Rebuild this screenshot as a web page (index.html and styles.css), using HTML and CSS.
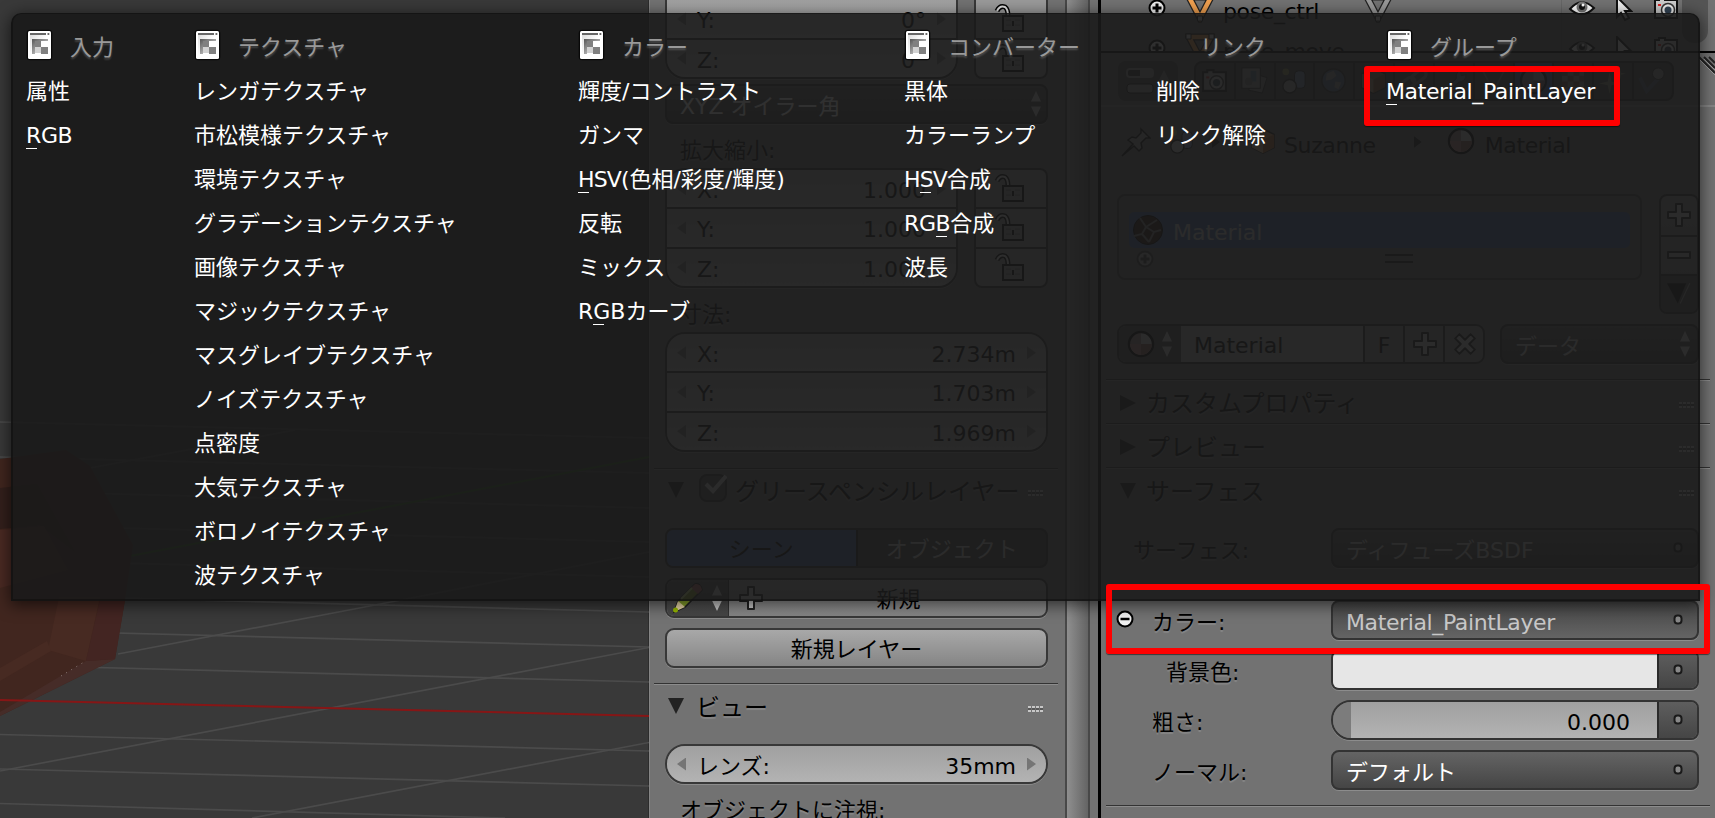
FILE: index.html
```
<!DOCTYPE html>
<html lang="ja">
<head>
    <meta charset="UTF-8">
    <meta name="viewport" content="width=device-width, initial-scale=1.0">
    <title>Blender</title>
    <link rel="stylesheet" href="styles.css">
</head>
<body>
    <!-- shared icons -->
    <svg class="defs" width="0" height="0">
        <defs>
            <linearGradient id="paper" x1="0" y1="0" x2="1" y2="1"><stop offset="0" stop-color="#ddd"/><stop offset=".5" stop-color="#fff"/></linearGradient>
            <linearGradient id="shade" x1="0" y1="0" x2="1" y2="1"><stop offset="0" stop-color="#555"/><stop offset="1" stop-color="#eee"/></linearGradient>
        </defs>
        <symbol id="i-node" viewBox="0 0 27 32">
            <rect x=".7" y=".7" width="25.6" height="30.6" rx="3.5" fill="#080808"/>
            <rect x="2" y="2" width="23" height="28" rx="1.5" fill="#fff"/>
            <rect x="4" y="6" width="19" height="22" fill="url(#paper)"/>
            <path d="M4 4h16v2H4zM21.500 4h1.800v2h-1.800z" fill="#666"/>
            <path d="M6 10h16v2H9v13H6z" fill="url(#shade)"/>
            <path d="M9 12h6v6H9zM15 18h7v7h-7z" fill="#808080"/>
            <path d="M9 18h6v6H9z" fill="#d2d2d2"/>
        </symbol>
        <symbol id="i-lock" viewBox="0 0 30 30">
            <path d="M3 8q3-6 8-4q3 2 3 9" fill="none" stroke="#000" stroke-width="5"/>
            <path d="M3 8q3-6 8-4q3 2 3 9" fill="none" stroke="#ddd" stroke-width="2"/>
            <rect x="9" y="13" width="20" height="15" fill="#999" stroke="#000" stroke-width="2"/>
            <path d="M12 17h5M12 22h5M21 17h5M21 22h5" stroke="#666"/><path d="M19 18v5" stroke="#000" stroke-width="2"/>
        </symbol>
        <symbol id="i-plus" viewBox="0 0 24 24">
            <path d="M9 1h6v8h8v6h-8v8H9v-8H1V9h8z" fill="#ccc" stroke="#222" stroke-width="2" stroke-linejoin="round"/>
        </symbol>
        <symbol id="i-minus" viewBox="0 0 24 24">
            <path d="M1 9h22v6H1z" fill="#aaa" stroke="#222" stroke-width="2" stroke-linejoin="round"/>
        </symbol>
        <symbol id="i-expand" viewBox="0 0 18 18">
            <circle cx="9" cy="9" r="7.500" fill="#eee" stroke="#000" stroke-width="2"/><path d="M4.500 9h9M9 4.500v9" stroke="#000" stroke-width="3"/>
        </symbol>
        <symbol id="i-collapse" viewBox="0 0 18 18">
            <circle cx="9" cy="9" r="7.500" fill="#f2f2f2" stroke="#000" stroke-width="2"/><path d="M4.500 9h9" stroke="#000" stroke-width="2.500"/>
        </symbol>
        <symbol id="i-material" viewBox="0 0 28 28">
            <circle cx="14" cy="14" r="12" fill="#ccc" stroke="#000" stroke-width="2.500"/>
            <path d="M14 14h11A11 11 0 0 1 3 14z" fill="#b98880"/>
            <path d="M14 14V3A11 11 0 0 0 3 14zM14 14v11a11 11 0 0 0 11-11z" fill="#644" fill-opacity=".5"/>
        </symbol>
        <symbol id="i-mesh" viewBox="0 0 30 30">
            <path d="M4 4h22L15 25z" fill="none" stroke="#222" stroke-width="7"/>
            <path d="M4 4h22L15 25z" fill="none" stroke="currentColor" stroke-width="4.500"/>
            <path d="M1 1h5v5H1zM24 1h5v5h-5zM12.500 23h5v5h-5z" fill="#ddd" stroke="#222"/>
        </symbol>
        <symbol id="i-eye" viewBox="0 0 28 18">
            <path d="M2 10Q13-3 26 9Q14 21 2 10z" fill="#fff" stroke="#111" stroke-width="2"/>
            <circle cx="14" cy="8" r="5.500" fill="#777"/><circle cx="14" cy="8" r="3" fill="#111"/><circle cx="15" cy="6" r="1.500" fill="#fff"/>
        </symbol>
        <symbol id="i-cursor" viewBox="0 0 18 26">
            <path d="M2 1v20l4-4 4 7 4-2-4-7h6z" fill="#eee" stroke="#111" stroke-width="2"/>
        </symbol>
        <symbol id="i-camera" viewBox="0 0 28 24">
            <path d="M3 4h4V2h6v2h12v18H3z" fill="#ccc" stroke="#111" stroke-width="2"/>
            <circle cx="16" cy="14" r="6.500" fill="#eee" stroke="#333" stroke-width="1.500"/><circle cx="16" cy="14" r="3.500" fill="#345"/><path d="M6 8h3v2H6z" fill="#d22"/>
        </symbol>
        <symbol id="i-scene" viewBox="0 0 30 30">
            <rect x="15" y="5" width="11" height="18" rx="4" fill="#8aa4d4" stroke="#222"/>
            <circle cx="10" cy="21" r="7" fill="#ccc" stroke="#222" stroke-width="1.500"/><circle cx="6" cy="6" r="3.500" fill="#bb6"/>
        </symbol>
        <symbol id="i-layers" viewBox="0 0 30 30">
            <path d="M14 8l14 4-5 16-14-3z" fill="#999" stroke="#222"/><rect x="2" y="2" width="19" height="21" fill="#bbb" stroke="#222"/>
            <rect x="11" y="5" width="6" height="11" fill="#68a"/><circle cx="9" cy="16" r="4" fill="#888"/>
        </symbol>
        <symbol id="i-world" viewBox="0 0 30 30">
            <circle cx="15" cy="15" r="12" fill="#6a82a4" stroke="#333" stroke-width="1.500"/><path d="M8 8l7-3 3 5-5 4-6 1zM17 16l6 1-3 7-4-2z" fill="#bbb"/>
        </symbol>
        <symbol id="i-cube" viewBox="0 0 30 30">
            <path d="M15 2l12 6v14l-12 6-12-6V8z" fill="#c99260" stroke="#222" stroke-width="1.500"/><path d="M15 14L3 8v14l12 6z" fill="#e0bb90"/><path d="M15 14l12-6v14l-12 6z" fill="#a86a34"/>
        </symbol>
        <symbol id="i-link" viewBox="0 0 30 30">
            <g fill="none" stroke="#999" stroke-width="3.500"><rect x="1" y="14" width="16" height="9" rx="4.500" transform="rotate(-38 9 18)"/><rect x="13" y="6" width="16" height="9" rx="4.500" transform="rotate(-38 21 11)"/></g>
        </symbol>
        <symbol id="i-wrench" viewBox="0 0 30 30">
            <path d="M4 27L18 13q-1-6 4-9l1 6 5-1q0 7-8 8L8 29z" fill="#7489aa" stroke="#333"/>
        </symbol>
        <symbol id="i-data" viewBox="0 0 30 30">
            <path d="M4 5h22L15 26z" fill="none" stroke="#888" stroke-width="2"/>
        </symbol>
        <symbol id="i-texture" viewBox="0 0 30 30">
            <rect x="4" y="4" width="23" height="23" fill="#aaa"/><path d="M4 4h6v6H4zM16 4h6v6h-6zM10 10h6v6h-6zM22 10h5v6h-5zM4 16h6v6H4zM16 16h6v6h-6zM10 22h6v5h-6z" fill="#855"/>
        </symbol>
        <symbol id="i-particles" viewBox="0 0 30 30">
            <path d="M12 6l2 10 9 2-9 2-2 9-2-9-9-2 9-2zM23 2l1 5 5 1-5 1-1 5-1-5-5-1 5-1z" fill="#aa8"/>
        </symbol>
        <symbol id="i-physics" viewBox="0 0 30 30">
            <path d="M2 12l7 14L22 12" fill="none" stroke="#5f7690" stroke-width="4"/><circle cx="21" cy="8" r="6" fill="#bbb" stroke="#333"/>
        </symbol>
        <symbol id="i-dot" viewBox="0 0 10 12">
            <rect x="1.500" y="1.500" width="7" height="8" rx="3" fill="#888" stroke="#1a1a1a" stroke-width="2"/>
        </symbol>
        <symbol id="i-updown" viewBox="0 0 10 26">
            <path d="M5 0l5 10.500H0zM5 26l5-10.500H0z" fill="currentColor"/>
        </symbol>
        <symbol id="i-grip" viewBox="0 0 15 7">
            <path d="M0 1h15M0 5h15" stroke="#ddd" stroke-width="2" stroke-dasharray="3 1"/><path d="M0 3h15" stroke="#333" stroke-dasharray="3 1"/>
        </symbol>
    </svg>

    <div class="viewport">
        <svg width="649" height="818" viewBox="0 0 649 818">
            <g class="grid">
                <path d="M0 422L649 438M0 457L649 473M0 491L649 508M0 525L649 542M0 560L649 577M0 595L649 612M0 630L649 647M0 665L649 682M0 734.500L649 751M0 769L649 786M0 803.500L505 818"/>
                <path d="M90 468L295 430M118 654L396 601L649 552M0 771L649 647.500M252 818L649 742.500"/>
            </g>
            <path class="axis-y" d="M130 556L649 457"/>
            <path class="mesh" d="M0 459L66 450L90 466L133 545L125 600L115 659L0 716z"/>
            <path class="mesh-dark" d="M0 488L37 484L75 552L40 525L0 529z"/>
            <path class="mesh-side" d="M59 597H100L86 661L48 650z"/>
            <path class="mesh-light" d="M0 530L44 526L68 570L0 588z"/>
            <path class="mesh-side" d="M0 668L47 641L51 651L0 681z"/>
            <path class="mesh-edge" d="M0 712L86 661L115 659L0 716z"/>
            <path class="mesh-red" d="M100 600H125L115 659L86 661z"/>
            <path class="dots" d="M61 676L84 662"/>
            <path class="axis-x" d="M0 700L649 716"/>
        </svg>
    </div>

    <div class="npanel">
        <div class="npanel-body">
            <div class="lock-row first">
                <div class="group">
                    <div class="num"></div>
                    <div class="num"><i></i><span>Y:</span><b>0°</b><i></i></div>
                    <div class="num"><i></i><span>Z:</span><b>0°</b><i></i></div>
                </div>
                <div class="locks">
                    <div><svg><use href="#i-lock"/></svg></div>
                    <div><svg><use href="#i-lock"/></svg></div>
                    <div><svg><use href="#i-lock"/></svg></div>
                </div>
            </div>
            <div class="dropdown euler"><span>XYZ オイラー角</span><svg class="updown"><use href="#i-updown"/></svg></div>
            <div class="label">拡大縮小:</div>
            <div class="lock-row">
                <div class="group">
                    <div class="num"><i></i><span>X:</span><b>1.000</b><i></i></div>
                    <div class="num"><i></i><span>Y:</span><b>1.000</b><i></i></div>
                    <div class="num"><i></i><span>Z:</span><b>1.000</b><i></i></div>
                </div>
                <div class="locks">
                    <div><svg><use href="#i-lock"/></svg></div>
                    <div><svg><use href="#i-lock"/></svg></div>
                    <div><svg><use href="#i-lock"/></svg></div>
                </div>
            </div>
            <div class="label">寸法:</div>
            <div class="group">
                <div class="num"><i></i><span>X:</span><b>2.734m</b><i></i></div>
                <div class="num"><i></i><span>Y:</span><b>1.703m</b><i></i></div>
                <div class="num"><i></i><span>Z:</span><b>1.969m</b><i></i></div>
            </div>
            <div class="panel-head grease">
                <i class="tri"></i>
                <span class="check"><svg width="28" height="28" viewBox="0 0 28 28"><path d="M7 10l7 7L27 2"/></svg></span>
                <h3>グリースペンシルレイヤー</h3>
                <svg class="grip"><use href="#i-grip"/></svg>
            </div>
            <div class="toggle"><span class="on">シーン</span><span>オブジェクト</span></div>
            <div class="new-row">
                <div class="pencil">
                    <svg width="32" height="32" viewBox="0 0 32 32"><path d="M2 30l4-11L23 2q6-1 7 6L13 25z" fill="#8aa52c" stroke="#222" stroke-width="1.500"/><path d="M23 2q6-1 7 6l-4 4-7-6z" fill="#b66"/><path d="M2 30l4-11 7 6z" fill="#eda"/><path d="M9 17L20 6" stroke="#d8e68a" stroke-width="2"/><circle cx="3.500" cy="28" r="2.500" fill="#9b0"/></svg>
                    <svg class="updown"><use href="#i-updown"/></svg>
                </div>
                <svg class="plus"><use href="#i-plus"/></svg>
                <span>新規</span>
            </div>
            <div class="button">新規レイヤー</div>
            <div class="panel-head view">
                <i class="tri"></i>
                <h3>ビュー</h3>
                <svg class="grip"><use href="#i-grip"/></svg>
            </div>
            <div class="group pill">
                <div class="num"><i></i><span>レンズ:</span><b>35mm</b><i></i></div>
            </div>
            <div class="label focus">オブジェクトに注視:</div>
        </div>
        <div class="scrollbar"></div>
    </div>

    <div class="properties">
        <div class="outliner">
            <div class="tree">
                <div class="tree-row"><svg class="expand"><use href="#i-expand"/></svg><svg class="mesh-icon"><use href="#i-mesh"/></svg><span class="latin">pose_ctrl</span><svg class="mesh-icon grey"><use href="#i-mesh"/></svg></div>
                <div class="tree-row"><svg class="expand"><use href="#i-expand"/></svg><svg class="mesh-icon"><use href="#i-mesh"/></svg><span class="latin">pose_move</span></div>
            </div>
            <div class="flags">
                <div><svg width="28" height="18"><use href="#i-eye"/></svg><svg width="18" height="26"><use href="#i-cursor"/></svg><svg width="28" height="24"><use href="#i-camera"/></svg></div>
                <div><svg width="28" height="18"><use href="#i-eye"/></svg><svg width="18" height="26"><use href="#i-cursor"/></svg><svg width="28" height="24"><use href="#i-camera"/></svg></div>
            </div>
            <div class="out-scroll"></div>
        </div>
        <div class="prop-header">
            <div class="editor-type"><svg width="28" height="28" viewBox="0 0 28 28"><rect x="1" y="2" width="26" height="8" rx="3" fill="#333" stroke="#999" stroke-width="2"/><path d="M14 2h12v8H14z" fill="#999"/><rect x="1" y="17" width="26" height="9" rx="3" fill="#999" stroke="#222"/></svg><i class="tri up"></i></div>
            <div class="tabs">
                <span><svg><use href="#i-camera"/></svg></span>
                <span><svg><use href="#i-layers"/></svg></span>
                <span><svg><use href="#i-scene"/></svg></span>
                <span><svg><use href="#i-world"/></svg></span>
                <span><svg><use href="#i-cube"/></svg></span>
                <span><svg><use href="#i-link"/></svg></span>
                <span><svg><use href="#i-wrench"/></svg></span>
                <span><svg><use href="#i-data"/></svg></span>
                <span class="on"><svg><use href="#i-material"/></svg></span>
                <span><svg><use href="#i-texture"/></svg></span>
                <span><svg><use href="#i-particles"/></svg></span>
                <span><svg><use href="#i-physics"/></svg></span>
            </div>
            <svg class="corner" width="16" height="24" viewBox="0 0 16 24"><path d="M0 2l16 16M5 2l11 11M10 2l6 6" stroke="#222" stroke-width="2"/><path d="M0 4l16 16M5 4l11 11" stroke="#999"/></svg>
        </div>
        <div class="context">
            <svg width="30" height="30" viewBox="0 0 30 30"><path d="M1 29l11-12-5-4 4-3 4 1 5-5 0-4 9 9-4 0-5 5 1 5-3 3-5-5z" fill="#999" stroke="#111" stroke-width="1.500"/></svg>
            <svg class="scene" width="28" height="28"><use href="#i-scene"/></svg>
            <i class="tri right"></i>
            <svg class="obj" width="28" height="28"><use href="#i-cube"/></svg>
            <span class="latin">Suzanne</span>
            <i class="tri right"></i>
            <svg class="mat" width="28" height="28"><use href="#i-material"/></svg>
            <span class="latin">Material</span>
        </div>
        <div class="slots">
            <div class="slot-list">
                <div class="slot"><svg width="32" height="32" viewBox="0 0 32 32"><circle cx="16" cy="16" r="14.500" fill="#2a1512" stroke="#000"/><path d="M8 4l6 9 11-7M14 13l-4 7-8 2M10 20l7 8M14 13l8 5 7-2M22 18l-5 10" stroke="#777" stroke-width="2" fill="none"/></svg><span>Material</span></div>
                <div class="slot-foot"><svg width="18" height="18"><use href="#i-expand"/></svg><i></i></div>
            </div>
            <div class="slot-tools">
                <div><svg><use href="#i-plus"/></svg></div>
                <div><svg><use href="#i-minus"/></svg></div>
                <div class="dark"><svg width="20" height="20" viewBox="0 0 20 20"><path d="M0 1h16L9 18z" fill="#111"/><path d="M19 1l-8 17" stroke="#999"/></svg></div>
            </div>
        </div>
        <div class="id-row">
            <div class="id-block">
                <div class="id-type"><svg width="28" height="28"><use href="#i-material"/></svg><svg class="updown"><use href="#i-updown"/></svg></div>
                <div class="id-name">Material</div>
                <div class="id-btn">F</div>
                <div class="id-btn"><svg><use href="#i-plus"/></svg></div>
                <div class="id-btn"><svg class="cross"><use href="#i-plus"/></svg></div>
            </div>
            <div class="dropdown soft id-link"><span>データ</span><svg class="updown"><use href="#i-updown"/></svg></div>
        </div>
        <div class="panel-head"><i class="tri right"></i><h3>カスタムプロパティ</h3><svg class="grip"><use href="#i-grip"/></svg></div>
        <div class="panel-head"><i class="tri right"></i><h3>プレビュー</h3><svg class="grip"><use href="#i-grip"/></svg></div>
        <div class="panel-head open"><i class="tri"></i><h3>サーフェス</h3><svg class="grip"><use href="#i-grip"/></svg></div>
        <div class="prop surface"><label>サーフェス:</label><div class="dropdown soft"><span>ディフューズBSDF</span><svg class="dot"><use href="#i-dot"/></svg></div></div>
        <div class="prop color"><svg class="collapse"><use href="#i-collapse"/></svg><label>カラー:</label><div class="dropdown pressed"><span class="latin">Material_PaintLayer</span><svg class="dot"><use href="#i-dot"/></svg></div></div>
        <div class="prop back"><label>背景色:</label><div class="combo"><div class="swatch"></div><div class="socket"><svg class="dot"><use href="#i-dot"/></svg></div></div></div>
        <div class="prop"><label>粗さ:</label><div class="combo slider"><div class="track">0.000</div><div class="socket"><svg class="dot"><use href="#i-dot"/></svg></div></div></div>
        <div class="prop"><label>ノーマル:</label><div class="dropdown"><span>デフォルト</span><svg class="dot"><use href="#i-dot"/></svg></div></div>
        <div class="panel-end"></div>
    </div>

    <div class="menu">
        <div class="col input">
            <div class="head"><svg><use href="#i-node"/></svg>入力</div>
            <a>属性</a>
            <a><span class="latin"><u>R</u>GB</span></a>
        </div>
        <div class="col texture">
            <div class="head"><svg><use href="#i-node"/></svg>テクスチャ</div>
            <a>レンガテクスチャ</a>
            <a>市松模様テクスチャ</a>
            <a>環境テクスチャ</a>
            <a>グラデーションテクスチャ</a>
            <a>画像テクスチャ</a>
            <a>マジックテクスチャ</a>
            <a>マスグレイブテクスチャ</a>
            <a>ノイズテクスチャ</a>
            <a>点密度</a>
            <a>大気テクスチャ</a>
            <a>ボロノイテクスチャ</a>
            <a>波テクスチャ</a>
        </div>
        <div class="col colors">
            <div class="head"><svg><use href="#i-node"/></svg>カラー</div>
            <a>輝度/コントラスト</a>
            <a>ガンマ</a>
            <a><span class="latin caps"><u>H</u>SV</span>(色相/彩度/輝度)</a>
            <a>反転</a>
            <a>ミックス</a>
            <a>R<u>G</u>Bカーブ</a>
        </div>
        <div class="col converter">
            <div class="head"><svg><use href="#i-node"/></svg>コンバーター</div>
            <a>黒体</a>
            <a>カラーランプ</a>
            <a><span class="latin caps">H<u>S</u>V</span>合成</a>
            <a><span class="latin">RG<u>B</u></span>合成</a>
            <a>波長</a>
        </div>
        <div class="col link">
            <div class="head no-icon">リンク</div>
            <a>削除</a>
            <a>リンク解除</a>
        </div>
        <div class="col groups">
            <div class="head"><svg><use href="#i-node"/></svg>グループ</div>
            <a><span class="latin"><u>M</u>aterial_PaintLayer</span></a>
        </div>
    </div>

    <div class="mark mark-item"></div>
    <div class="mark mark-color"></div>
</body>
</html>
```
FILE: styles.css
```
* {
    box-sizing: border-box;
}
body {
    margin: 0;
    width: 1715px;
    height: 818px;
    overflow: hidden;
    position: relative;
    display: flex;
    background: #727272;
    color: #000;
    font-family: "DejaVu Sans", "Noto Sans CJK JP", sans-serif;
    font-size: 22px;
    line-height: 30px;
}
svg {
    display: block;
    flex: none;
}
.defs {
    position: absolute;
}
.latin { letter-spacing: -0.38px; }
.caps { letter-spacing: -0.9px; }

/* 3D view */
.viewport {
    width: 649px;
    flex: none;
    background: #393939;
    border-right: 1px solid #2c2c2c;
}
.grid path {
    fill: none;
    stroke: #4b4b4b;
    stroke-width: 1.7;
}
.axis-y { fill: none; stroke: #2c5a1c; stroke-width: 2; }
.axis-x { fill: none; stroke: #861616; stroke-width: 2; }
.mesh { fill: #41261f; }
.mesh-dark { fill: #33201c; }
.mesh-light { fill: #4a2a23; }
.mesh-side { fill: #472a22; }
.mesh-edge { fill: #462c28; }
.mesh-red { fill: #432522; }
.dots { stroke: #8a7a76; stroke-dasharray: 1 5; }

/* shared widgets */
.tri {
    flex: none;
    width: 16px;
    height: 16px;
    background: #222;
    clip-path: polygon(0 0, 100% 0, 50% 100%);
}
.tri.right { clip-path: polygon(0 0, 100% 50%, 0 100%); }
.tri.up { clip-path: polygon(50% 0, 100% 100%, 0 100%); }
.updown {
    width: 10px;
    height: 26px;
    color: #ccc;
}
.dropdown {
    height: 40px;
    display: flex;
    align-items: center;
    justify-content: space-between;
    border: 2px solid #333;
    border-radius: 8px;
    background: linear-gradient(#646464, #454545);
    box-shadow: 0 1px 0 #8c8c8c;
    color: #fff;
    padding: 0 13px;
}
.dropdown span {
    padding-top: 5px;
}
.dropdown.pressed {
    background: linear-gradient(#464646, #646464);
    color: #c8c8c8;
}
.dropdown.soft {
    color: #ccc;
}
.group {
    width: 383px;
    height: 120px;
    display: flex;
    flex-direction: column;
    border: 2px solid #383838;
    border-radius: 20px;
    overflow: hidden;
    box-shadow: 0 1px 0 #8c8c8c;
}
.num {
    flex: 1;
    display: flex;
    align-items: center;
    padding: 0 10px;
    background: linear-gradient(#a0a0a0, #b3b3b3);
}
.num + .num {
    border-top: 2px solid #383838;
}
.num i {
    width: 9px;
    height: 13px;
    background: #757575;
    clip-path: polygon(0 50%, 100% 0, 100% 100%);
}
.num i:last-child {
    clip-path: polygon(0 0, 100% 50%, 0 100%);
}
.num span {
    flex: 1;
    padding: 5px 0 0 11px;
}
.num b {
    font-weight: normal;
    padding: 5px 11px 0 0;
}
.panel-head {
    display: flex;
    align-items: flex-start;
    border-top: 1px solid #333;
    box-shadow: inset 0 1px 0 #8c8c8c;
}
.panel-head h3 {
    margin: 0;
    flex: 1;
    font-size: 24px;
    font-weight: normal;
    line-height: 30px;
    white-space: nowrap;
    text-shadow: 0 2px 1px rgba(255, 255, 255, 0.15);
}
.grip {
    width: 15px;
    height: 7px;
}

/* N panel */
.npanel {
    flex: none;
    width: 449px;
    display: flex;
    border-left: 1px solid #858585;
    overflow: hidden;
}
.npanel-body {
    width: 415px;
    height: 818px;
    padding-left: 15px;
    flex: none;
    overflow: hidden;
}
.scrollbar {
    margin: -20px 0;
    width: 25px;
    border: 2px solid #484848;
    border-bottom: 0;
    background: linear-gradient(90deg, #8f8f8f, #646464);
}
.lock-row {
    display: flex;
    gap: 16px;
}
.lock-row.first {
    margin-top: -41px;
}
.lock-row .group {
    width: 293px;
}
.locks {
    width: 74px;
    display: flex;
    flex-direction: column;
    border: 2px solid #383838;
    border-radius: 8px;
    background: #9a9a9a;
}
.locks div {
    flex: 1;
    display: flex;
    padding: 3px 0 0 18px;
}
.locks div + div {
    border-top: 2px solid #383838;
}
.locks svg {
    width: 30px;
    height: 30px;
}
.euler {
    width: 383px;
    margin-top: 5px;
    padding-right: 5px;
}
.label {
    height: 44px;
    padding: 12px 0 0 15px;
    text-shadow: 0 2px 1px rgba(255, 255, 255, 0.15);
}
.npanel .panel-head {
    width: 404px;
    margin-left: -11px;
    padding: 13px 15px 0 14px;
}
.grease {
    height: 60px;
    margin-top: 16px;
}
.check {
    width: 28px;
    height: 28px;
    margin: -8px 8px 0 15px;
    border: 2px solid #333;
    border-radius: 8px;
    background: #555;
}
.check svg { margin: -2px; }
.check path {
    fill: none;
    stroke: #ccc;
    stroke-width: 4;
}
.grease h3, .view h3 { margin-top: -5px; }
.grease .grip, .view .grip { margin-top: 8px; }
.toggle {
    width: 383px;
    height: 40px;
    display: flex;
    border: 2px solid #333;
    border-radius: 8px;
    overflow: hidden;
    background: #484848;
    color: #ccc;
    text-align: center;
}
.toggle span {
    flex: 1;
    padding-top: 5px;
}
.toggle .on {
    background: #4d6a9f;
    border-right: 2px solid #222;
    color: #000;
}
.new-row, .button {
    width: 383px;
    height: 40px;
    margin-top: 10px;
    border: 2px solid #383838;
    border-radius: 9px;
    box-shadow: 0 1px 0 #8c8c8c;
    background: linear-gradient(#a8a8a8, #858585);
}
.new-row {
    display: flex;
    overflow: hidden;
}
.new-row span {
    flex: 1;
    padding: 5px 12px 0 0;
    text-align: center;
}
.pencil {
    width: 62px;
    display: flex;
    align-items: center;
    padding-left: 5px;
    gap: 8px;
    background: linear-gradient(#646464, #454545);
    border-right: 1px solid #333;
}
.plus {
    width: 24px;
    height: 24px;
    margin: 6px 0 0 10px;
}
.button {
    padding-top: 5px;
    text-align: center;
}
.view {
    height: 61px;
    margin-top: 15px;
}
.npanel .view {
    padding-top: 14px;
}
.view h3 { padding-left: 12px; }
.pill {
    height: 40px;
}

/* outliner */
.properties {
    flex: none;
    width: 617px;
    border-left: 3px solid #000;
    display: flex;
    flex-direction: column;
}
.outliner {
    height: 53px;
    flex: none;
    display: flex;
    overflow: hidden;
    border-bottom: 2px solid #000;
}
.tree { width: 460px; }
.tree-row {
    height: 40px;
    display: flex;
    padding-left: 47px;
}
.tree-row .expand {
    width: 18px;
    height: 18px;
    margin-top: -1px;
}
.tree-row .mesh-icon {
    width: 30px;
    height: 30px;
    margin: -7px 8px 0 19px;
    color: #f0a050;
}
.tree-row .grey {
    margin-left: 44px;
    color: #999;
}
.tree-row span { margin-top: -3px; }
.flags {
    width: 120px;
    border-left: 1px solid #666;
}
.flags div {
    height: 40px;
    display: flex;
    padding-left: 6px;
    gap: 19px;
}
.flags svg { margin-top: -4px; }
.flags svg:first-child { margin-top: -1px; }
.out-scroll {
    width: 26px;
    height: 43px;
    margin-left: 1px;
    background: #555;
    border-radius: 0 0 12px 12px;
}

/* properties editor */
.prop-header {
    height: 54px;
    flex: none;
    display: flex;
    padding: 8px 0 0 17px;
    border-bottom: 2px solid #858585;
}
.editor-type {
    width: 60px;
    height: 40px;
    display: flex;
    gap: 5px;
    padding: 6px 8px;
    border-radius: 8px;
    background: #505050;
}
.editor-type .tri {
    width: 10px;
    height: 10px;
    background: #888;
    margin-top: 3px;
}
.tabs {
    width: 480px;
    height: 40px;
    margin-left: 16px;
    display: flex;
    border: 2px solid #333;
    border-radius: 8px;
    background: #505050;
    overflow: hidden;
}
.tabs span {
    flex: 1;
    padding: 3px 4px;
}
.tabs span + span { border-left: 2px solid #333; }
.tabs .on { background: #4d6a9f; }
.tabs svg {
    width: 29px;
    height: 29px;
    opacity: 0.7;
}
.corner {
    margin: -6px 0 0 auto;
}
.context {
    height: 87px;
    flex: none;
    display: flex;
    align-items: flex-start;
    padding: 20px 0 0 20px;
}
.context span { padding-top: 4px; }
.context .tri { width: 8px; height: 12px; margin-top: 9px; }
.context .scene { margin: 0 16px 0 17px; }
.context .obj { margin: 0 7px 0 29px; }
.context span + .tri { margin-left: 38px; }
.context .mat { margin: 0 10px 0 25px; }
.slots {
    height: 120px;
    flex: none;
    display: flex;
    gap: 17px;
    padding-left: 16px;
}
.slot-list {
    width: 525px;
    height: 86px;
    padding: 16px 10px 0;
    border: 2px solid #494949;
    border-radius: 8px;
}
.slot {
    height: 36px;
    display: flex;
    align-items: center;
    padding-left: 3px;
    border-radius: 5px;
    background: #4d6a9f;
    color: #ccc;
}
.slot span { padding: 5px 0 0 9px; }
.slot-foot {
    display: flex;
    padding: 2px 0 0 7px;
}
.slot-foot svg { opacity: 0.4; }
.slot-foot i {
    width: 28px;
    height: 9px;
    margin: 4px 0 0 231px;
    border: 2px solid #222;
    border-width: 2px 0;
}
.slot-tools {
    width: 40px;
    height: 120px;
    border: 2px solid #383838;
    border-radius: 8px;
    background: linear-gradient(#909090, #777);
    overflow: hidden;
}
.slot-tools div {
    height: 39px;
    display: flex;
    align-items: center;
    justify-content: center;
}
.slot-tools div + div { border-top: 2px solid #383838; }
.slot-tools svg { width: 24px; height: 24px; margin-top: -2px; }
.slot-tools .dark { height: 40px; background: #505050; }
.id-row {
    height: 65px;
    flex: none;
    display: flex;
    gap: 15px;
    padding: 10px 0 0 16px;
}
.id-block {
    width: 368px;
    height: 40px;
    display: flex;
    border: 2px solid #383838;
    border-radius: 9px;
    background: #929292;
    overflow: hidden;
}
.id-type {
    width: 62px;
    display: flex;
    align-items: center;
    gap: 7px;
    padding-left: 8px;
    background: #505050;
}
.id-name {
    flex: 1;
    padding: 5px 0 0 13px;
    background: #a8a8a8;
}
.id-btn {
    width: 40px;
    padding-top: 5px;
    border-left: 2px solid #383838;
    text-align: center;
}
.id-btn svg {
    width: 24px;
    height: 24px;
    margin: 1px 0 0 8px;
}
.cross { transform: rotate(45deg); }
.id-link { width: 199px; padding-right: 7px; }
.properties .panel-head {
    height: 44px;
    flex: none;
    width: 604px;
    margin-left: 5px;
    padding: 15px 16px 0 14px;
}
.properties .panel-head h3 {
    margin-top: -6px;
    padding-left: 10px;
}
.properties .panel-head .grip { margin-top: 7px; }
.grip { opacity: 0.8; }
.properties .open { height: 61px; }
.prop {
    height: 50px;
    flex: none;
    display: flex;
    padding-left: 51px;
}
.prop label {
    width: 179px;
    padding-top: 8px;
    text-shadow: 0 2px 1px rgba(255, 255, 255, 0.15);
}
.prop .dropdown, .combo { width: 368px; }
.surface { height: 72px; padding-left: 32px; }
.surface label { width: 198px; }
.collapse {
    width: 18px;
    height: 18px;
    margin: 10px 18px 0 -36px;
}
.back { padding-left: 65px; }
.back label { width: 165px; }
.dot {
    width: 10px;
    height: 12px;
}
.prop .dropdown { padding-right: 14px; }
.combo {
    height: 40px;
    display: flex;
    border: 2px solid #333;
    border-radius: 8px;
    overflow: hidden;
    box-shadow: 0 1px 0 #8c8c8c;
}
.slider { border-radius: 20px 8px 8px 20px; }
.swatch {
    flex: 1;
    background: #e6e6e6;
}
.track {
    flex: 1;
    padding: 6px 27px 0 0;
    text-align: right;
    background: linear-gradient(#a0a0a0, #b3b3b3);
    border-left: 18px solid #7c7c7c;
}
.socket {
    width: 40px;
    padding: 12px 0 0 14px;
    border-left: 2px solid #2a2a2a;
    background: linear-gradient(#5e5e5e, #454545);
}
.color { padding-left: 51px; }
.panel-end {
    flex: none;
    width: 604px;
    height: 2px;
    margin: 5px 0 0 5px;
    border-top: 1px solid #333;
    border-bottom: 1px solid #8c8c8c;
}

/* add node menu */
.menu {
    position: absolute;
    left: 11px;
    top: 13px;
    width: 1689px;
    height: 588px;
    display: flex;
    padding: 12px 0 0 13px;
    border: 2px solid rgba(10, 10, 10, 0.4);
    border-top-width: 1px;
    border-radius: 10px 10px 0 0;
    background: rgba(25, 25, 25, 0.9);
    box-shadow: 0 3px 16px 1px rgba(0, 0, 0, 0.6);
    color: #fff;
    white-space: nowrap;
}
.col {
    flex: none;
    display: flex;
    flex-direction: column;
}
.input { width: 168px; }
.texture { width: 384px; }
.colors { width: 326px; }
.converter { width: 252px; }
.link { width: 230px; }
.col a {
    height: 44px;
    line-height: 44px;
}
.head {
    height: 44px;
    line-height: 43px;
    display: flex;
    color: #999;
    text-shadow: 0 2px 2px rgba(255, 255, 255, 0.2);
}
.head svg {
    width: 27px;
    height: 32px;
    margin: 3px 17px 0 0;
}
.no-icon { padding-left: 44px; }
.col u {
    display: inline-block;
    line-height: 26px;
    text-decoration: none;
    background: linear-gradient(#fff, #fff) -1px 100% / 12px 1px no-repeat;
}

/* annotations */
.mark {
    position: absolute;
    border: 6px solid #f00;
    border-radius: 3px;
    box-shadow: 0 1px 1px rgba(0, 0, 0, 0.5);
}
.mark-item {
    left: 1364px;
    top: 66px;
    width: 256px;
    height: 60px;
}
.mark-color {
    left: 1106px;
    top: 584px;
    width: 604px;
    height: 70px;
}
```
